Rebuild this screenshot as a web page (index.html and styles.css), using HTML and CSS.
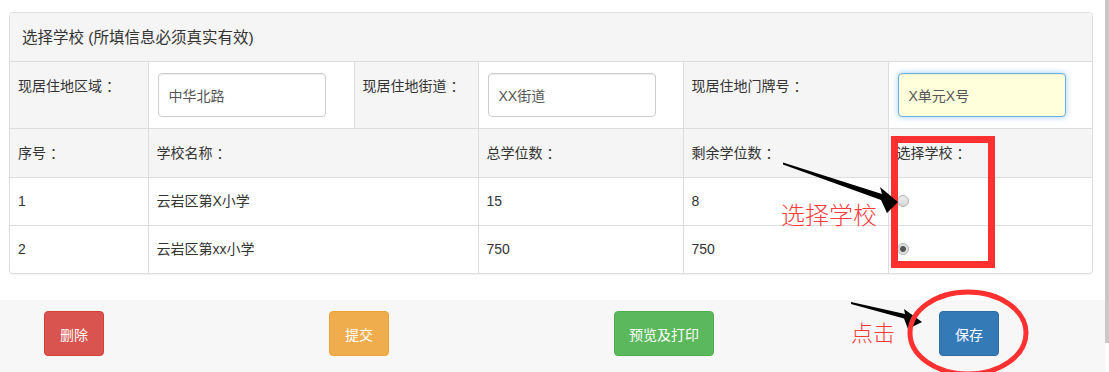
FILE: index.html
```html
<!DOCTYPE html>
<html lang="zh-CN">
<head>
  <meta charset="UTF-8">
  <title>选择学校</title>
  <link rel="stylesheet" href="styles.css">
</head>
<body>
  <div class="page">
    <div class="panel">
      <div class="panel-heading">选择学校 (所填信息必须真实有效)</div>
      <table class="grid">
        <colgroup>
          <col style="width:138px">
          <col style="width:206px">
          <col style="width:124px">
          <col style="width:205px">
          <col style="width:205px">
          <col style="width:204px">
        </colgroup>
        <tr class="addr">
          <td class="label">现居住地区域<span class="colon">：</span></td>
          <td><input class="field" type="text" value="中华北路"></td>
          <td class="label">现居住地街道<span class="colon">：</span></td>
          <td><input class="field" type="text" value="XX街道"></td>
          <td class="label">现居住地门牌号<span class="colon">：</span></td>
          <td><input class="field autofill" type="text" value="X单元X号"></td>
        </tr>
        <tr class="head">
          <td>序号<span class="colon">：</span></td>
          <td colspan="2">学校名称<span class="colon">：</span></td>
          <td>总学位数<span class="colon">：</span></td>
          <td>剩余学位数<span class="colon">：</span></td>
          <td>选择学校<span class="colon">：</span></td>
        </tr>
        <tr class="row">
          <td>1</td>
          <td colspan="2">云岩区第X小学</td>
          <td>15</td>
          <td>8</td>
          <td><span class="radio"></span></td>
        </tr>
        <tr class="row">
          <td>2</td>
          <td colspan="2">云岩区第xx小学</td>
          <td>750</td>
          <td>750</td>
          <td><span class="radio checked"></span></td>
        </tr>
      </table>
    </div>

    <div class="actions">
      <button class="btn btn-danger">删除</button>
      <button class="btn btn-warning">提交</button>
      <button class="btn btn-success">预览及打印</button>
      <button class="btn btn-primary">保存</button>
    </div>

    <!-- 标注 -->
    <div class="mark-box"></div>
    <div class="note note-school">选择学校</div>
    <div class="note note-click">点击</div>
    <svg class="marks" width="1109" height="372" viewBox="0 0 1109 372">
      <polygon points="783,162.5 882,194 880,187 898,202 887,213 881,200 783,164.5" fill="#000"/>
      <polygon points="851,302 905,314 904,309 922,322 908,329 904,318.5 851,304" fill="#000"/>
      <ellipse cx="968" cy="333" rx="58" ry="41" fill="none" stroke="#ff3030" stroke-width="5"/>
    </svg>
    <div class="scrollbar"></div>
  </div>
</body>
</html>
```

FILE: styles.css
```css
body {
  margin: 0;
  font-family: 'Liberation Sans', 'Noto Sans CJK SC', sans-serif;
  color: #333;
  background: #fff;
}

.page {
  position: relative;
  width: 1109px;
  height: 372px;
  overflow: hidden;
}

.panel {
  box-sizing: border-box;
  width: 1084px;
  margin: 12px 0 0 9px;
  border: 1px solid #ddd;
  border-radius: 4px;
  box-shadow: 0 1px 1px rgba(0, 0, 0, 0.05);
  overflow: hidden;
}

.panel-heading {
  padding: 15px 12px 13px;
  font-size: 15.5px;
  line-height: 20px;
  background: #f5f5f5;
  border-bottom: 1px solid #ddd;
}

.grid {
  width: 100%;
  border-collapse: collapse;
  table-layout: fixed;
}

.grid td {
  padding: 0 8px;
  font-size: 14px;
  line-height: 20px;
  border-top: 1px solid #ddd;
  border-left: 1px solid #ddd;
  white-space: nowrap;
}

.grid td:first-child {
  border-left: 0;
}

.grid tr:first-child td {
  border-top: 0;
}

/* 冒号居中显示 */
.colon {
  margin-left: 4px;
}

.addr {
  height: 66px;
}

.addr .label {
  vertical-align: top;
  padding-top: 14px;
  background: #f5f5f5;
}

.head {
  height: 49px;
}

.head td {
  background: #f5f5f5;
}

.row {
  height: 48px;
}

.field {
  box-sizing: border-box;
  display: block;
  width: 168px;
  height: 44px;
  padding: 0 10px;
  margin-left: 1px;
  font-family: inherit;
  font-size: 14px;
  color: #555;
  border: 1px solid #ccc;
  border-radius: 4px;
  box-shadow: inset 0 1px 1px rgba(0, 0, 0, 0.075);
}

.autofill {
  background: #ffffdc;
  border-color: #66afe9;
  box-shadow: inset 0 1px 1px rgba(0, 0, 0, 0.075), 0 0 6px rgba(102, 175, 233, 0.6);
}

.radio {
  display: block;
  box-sizing: border-box;
  width: 12px;
  height: 12px;
  border: 1px solid #b4b4b4;
  border-radius: 50%;
  background: linear-gradient(#eee, #d6d6d6);
}

.radio.checked {
  background: radial-gradient(circle, #555 0, #555 2.5px, #ddd 3.5px, #ececec 100%);
}

.actions {
  display: flex;
  gap: 225px;
  width: 1105px;
  height: 72px;
  margin-top: 26px;
  padding: 11px 0 0 44px;
  box-sizing: border-box;
  background: #f7f7f7;
}

.btn {
  height: 45px;
  padding: 0 15px;
  font-family: inherit;
  font-size: 14px;
  color: #fff;
  border: 1px solid transparent;
  border-radius: 4px;
}

.btn-danger {
  background: #d9534f;
  border-color: #d43f3a;
}

.btn-warning {
  background: #f0ad4e;
  border-color: #eea236;
}

.btn-success {
  padding: 0 14px;
  background: #5cb85c;
  border-color: #4cae4c;
}

.btn-primary {
  background: #337ab7;
  border-color: #2e6da4;
}

.mark-box {
  position: absolute;
  left: 891px;
  top: 136px;
  width: 104px;
  height: 132px;
  box-sizing: border-box;
  border: 7px solid #ff3030;
}

.note {
  position: absolute;
  color: #ff3a3a;
  font-weight: 300;
  white-space: nowrap;
}

.note-school {
  left: 781px;
  top: 199px;
  font-size: 24px;
  line-height: 34px;
}

.note-click {
  left: 851px;
  top: 318px;
  font-size: 22px;
  line-height: 32px;
}

.marks {
  position: absolute;
  left: 0;
  top: 0;
  pointer-events: none;
}

.scrollbar {
  position: absolute;
  right: 0;
  top: 0;
  width: 4px;
  height: 343px;
  background: #c8c8c8;
}
```
